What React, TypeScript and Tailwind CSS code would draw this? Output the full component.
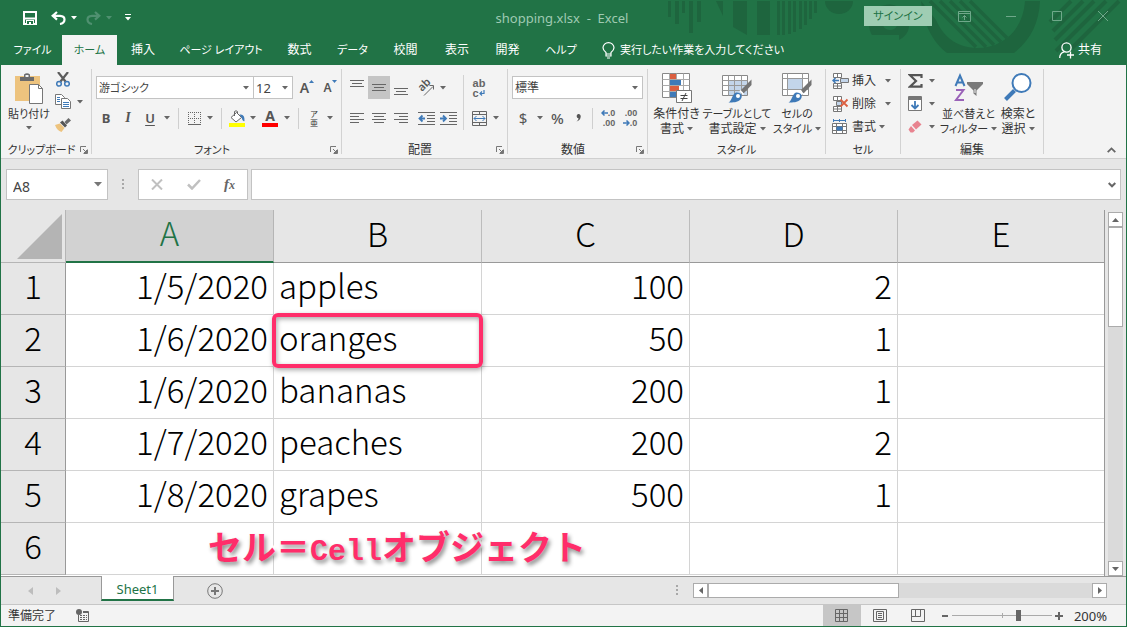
import React, { ReactNode, useState } from "react";

const DARK = "#666666";
const BLUE = "#3f7ab8";

function Caret({ className = "text-[#666]" }: { className?: string }) {
  return (
    <svg width="6" height="4" viewBox="0 0 6 4" className={"inline-block shrink-0 " + className} aria-hidden="true">
      <path d="M0 0H6L3 3.4Z" fill="currentColor" />
    </svg>
  );
}

// Labels made mostly of kana are set one size smaller than kanji labels.
function labelSize(text: string) {
  const kana = text.replace(/[^\u3041-\u30ff]/g, "").length;
  return kana * 2 > text.length ? "text-[11px]" : "text-[12px]";
}

function IconButton({ label, className = "w-[22px]", children }: { label: string; className?: string; children: ReactNode }) {
  return (
    <button type="button" aria-label={label} className={"flex h-full shrink-0 items-center justify-center " + className}>
      {children}
    </button>
  );
}

function CaretButton({ label }: { label: string }) {
  return (
    <IconButton label={label} className="w-3">
      <Caret />
    </IconButton>
  );
}

function RowDivider() {
  return <span className="mx-[5px] h-[21px] w-px shrink-0 bg-[#cfcfcf]" />;
}

function Group({ title, launcher, className, children }: { title: string; launcher?: boolean; className: string; children: ReactNode }) {
  return (
    <>
      <section aria-label={title} className={"flex shrink-0 flex-col " + className}>
        <div className="flex h-[72px]">{children}</div>
        <div className="flex h-[17px] items-center px-[3px]">
          <span className={"flex-1 whitespace-nowrap text-center leading-4 text-[#333] " + labelSize(title)}>{title}</span>
          {launcher && (
            <button type="button" aria-label={title + "の詳細"} className="flex w-[9px] justify-center">
              <svg width="8" height="8" viewBox="0 0 8 8" fill="none" stroke="#777" aria-hidden="true">
                <path d="M.5 6V.5H6M3 3L6.5 6.5M7.5 3.5V7.5H3.5" />
                <path d="M7 4V7H4Z" fill="#777" />
              </svg>
            </button>
          )}
        </div>
      </section>
      <span className="h-[85px] w-px shrink-0 bg-[#d2d2d2]" />
    </>
  );
}

function BigButton({ icon, lines, className }: { icon: ReactNode; lines: [string, string]; className: string }) {
  return (
    <button type="button" className={"flex shrink-0 flex-col items-center pt-1 leading-[15px] text-[#333] " + className}>
      <span className="flex h-[33px] items-start justify-center">{icon}</span>
      <span className={"whitespace-nowrap leading-[15px] " + labelSize(lines[0])}>{lines[0]}</span>
      <span className={"flex items-center gap-[3px] whitespace-nowrap leading-[15px] " + labelSize(lines[1])}>
        {lines[1]}
        <Caret />
      </span>
    </button>
  );
}

function HLines({ rows }: { rows: [number, number, number][] }) {
  return (
    <svg width="15" height="15" viewBox="0 0 15 15" stroke={DARK} aria-hidden="true">
      {rows.map(([y, a, b]) => (
        <path key={y} d={`M${a} ${y}.5H${b}`} />
      ))}
    </svg>
  );
}

function SelectBox({ label, options, className }: { label: string; options: string[]; className: string }) {
  return (
    <div className={"relative h-[23px] shrink-0 " + className}>
      <select
        aria-label={label}
        className="block h-full w-full appearance-none border border-[#c3c3c3] bg-white pl-[2px] leading-5 text-[#444] outline-none"
      >
        {options.map((o) => (
          <option key={o}>{o}</option>
        ))}
      </select>
      <span className="pointer-events-none absolute inset-y-0 right-[5px] flex items-center">
        <Caret />
      </span>
    </div>
  );
}

function TitlePattern() {
  return (
    <svg className="pointer-events-none absolute right-0 top-0" width="460" height="54" viewBox="667 0 460 54" fill="#1e653e" aria-hidden="true">
      <path d="M668 1h3v16h-3zM675 1h4v23h-4zM682 1h3v12h-3zM689 1h4v32h-4zM697 1h4v21h-4zM716 1h7v15zM733 1h14v34l-14-8zM757 1h13v34h-13z" />
      <path d="M777 1h3v34h-3zM782 1h3v34h-3zM788 1h3v33h-3zM793 1h3v31h-3zM799 1h3v28h-3zM804 1h3v24h-3zM809 1h3v18h-3zM814 1h3v12h-3z" />
      <path d="M825 1h28a14 13 0 0 1-28 0z" />
      <path fillRule="evenodd" d="M872 35A20 20 0 1 1 908 31A20 20 0 0 1 899 40V35ZM890 14A8 8 0 1 0 890.1 14Z" />
      <path d="M921 1C924 27 934 43 947 53H1014C1030 40 1039 24 1040 1H1025C1023 30 1003 48 977 48C955 48 942 34 936 20Z" />
      <g stroke="#1e653e" strokeWidth="3.5">
        <path d="M930 1L976 47M940 1L986 47M950 1L994 45M960 1L1001 42M970 1L1007 38" />
      </g>
      <g stroke="#1e653e" strokeWidth="4">
        <path d="M1071 1L1050 22M1083 1L1053 31M1094 1L1055 40M1106 1L1056 51M1119 1L1072 48" />
      </g>
    </svg>
  );
}

function TitleBar() {
  return (
    <header className="relative flex h-[35px] items-center bg-[#217346] text-white">
      <TitlePattern />
      <div className="flex h-full w-[260px] shrink-0 items-center pl-[23px]">
        <button type="button" aria-label="上書き保存" className="mr-[14px]">
          <svg width="14" height="14" viewBox="0 0 14 14" fill="none" stroke="white" strokeWidth="2" aria-hidden="true">
            <path d="M1 1H13V13H1Z" />
            <path d="M2 7.500H12" strokeWidth="2" />
            <path d="M3 9H11V13H3Z" fill="white" stroke="none" />
            <path d="M4 10H10V13H4Z" fill="#217346" stroke="none" />
            <path d="M6 11H8V13H6Z" fill="white" stroke="none" />
          </svg>
        </button>
        <button type="button" aria-label="元に戻す" className="flex items-center gap-[5px]">
          <svg width="15" height="14" viewBox="0 0 15 14" fill="none" stroke="white" strokeWidth="2.200" aria-hidden="true">
            <path d="M6 1L1.700 4.800L6 8.600M2 4.800H9C15 5 15 12 9 13" />
          </svg>
          <Caret className="text-white" />
        </button>
        <button type="button" aria-label="やり直し" className="ml-[9px] flex items-center gap-[5px]">
          <svg width="15" height="14" viewBox="0 0 15 14" fill="none" stroke="#4f9070" strokeWidth="2.200" aria-hidden="true">
            <path d="M9 1L13.300 4.800L9 8.600M13 4.800H6C0 5 0 12 6 13" />
          </svg>
          <Caret className="text-[#4f9070]" />
        </button>
        <button type="button" aria-label="クイック アクセスのカスタマイズ" className="ml-[13px]">
          <svg width="6" height="7" viewBox="0 0 6 7" fill="white" aria-hidden="true">
            <path d="M0 0h6v1h-6zM0 3h6l-3 3.400z" />
          </svg>
        </button>
      </div>
      <h1 className="flex-1 whitespace-pre text-center text-[13px] font-normal leading-5 text-[#9fcab2]">shopping.xlsx  -  Excel</h1>
      <div className="relative flex h-full w-[263px] shrink-0 items-start">
        <button type="button" className="mt-[6px] h-5 w-[68px] bg-[#9fcdb3] text-[11px] leading-5 text-[#217346]">
          サインイン
        </button>
        <button type="button" aria-label="リボンの表示オプション" className="mt-[11px] ml-[26px]">
          <svg width="13" height="11" viewBox="0 0 13 11" fill="none" stroke="#6fa88a" aria-hidden="true">
            <path d="M.5 .5H12.500V10.500H.5ZM.5 2.500H12.500M6.500 9V4.500M4.500 6.500L6.500 4.500L8.500 6.500" />
          </svg>
        </button>
        <button type="button" aria-label="最小化" className="mt-[11px] ml-[35px]">
          <svg width="10" height="10" viewBox="0 0 10 10" stroke="#6fa88a" aria-hidden="true">
            <path d="M0 5.500H10" />
          </svg>
        </button>
        <button type="button" aria-label="最大化" className="mt-[11px] ml-[36px]">
          <svg width="10" height="10" viewBox="0 0 10 10" fill="none" stroke="#6fa88a" aria-hidden="true">
            <path d="M.5 .5H9.500V9.500H.5Z" />
          </svg>
        </button>
        <button type="button" aria-label="閉じる" className="mt-[11px] ml-[36px]">
          <svg width="10" height="10" viewBox="0 0 10 10" stroke="#6fa88a" aria-hidden="true">
            <path d="M0 0L10 10M10 0L0 10" />
          </svg>
        </button>
      </div>
    </header>
  );
}

const TABS: [string, string][] = [
  ["ファイル", "w-[59px]"],
  ["ホーム", "w-[55px]"],
  ["挿入", "w-[52px]"],
  ["ページ レイアウト", "w-[104px]"],
  ["数式", "w-[53px]"],
  ["データ", "w-[53px]"],
  ["校閲", "w-[53px]"],
  ["表示", "w-[50px]"],
  ["開発", "w-[51px]"],
  ["ヘルプ", "w-[56px]"],
];

function TabStrip() {
  return (
    <nav className="flex h-[30px] items-stretch bg-[#217346] pl-[3px] text-[12px] leading-5 text-white">
      {TABS.map(([name, width]) => (
        <button
          key={name}
          type="button"
          className={"relative shrink-0 whitespace-nowrap " + labelSize(name) + " " + width + (name === "ホーム" ? " bg-[#f3f3f3] text-[#217346]" : "")}
        >
          {name}
        </button>
      ))}
      <button type="button" className="relative ml-[13px] flex items-center gap-[5px] whitespace-nowrap text-[11px]">
        <svg width="13" height="17" viewBox="0 0 13 17" fill="none" stroke="white" strokeWidth="1.2" aria-hidden="true">
          <path d="M4 12V10.5C2 9 1 7.500 1 5.800A5.500 5.200 0 0 1 12 5.800C12 7.500 11 9 9 10.500V12ZM4 12V14H9V12M5 16H8" />
        </svg>
        実行したい作業を入力してください
      </button>
      <button type="button" className="relative ml-auto mr-[25px] flex items-center gap-1">
        <svg width="15" height="17" viewBox="0 0 15 17" fill="none" stroke="white" strokeWidth="1.3" aria-hidden="true">
          <circle cx="7.500" cy="5.500" r="4.600" />
          <path d="M.7 16C.7 12.500 2.500 10.700 5 9.800M11.500 9.500V16.500M8 13H15" />
        </svg>
        共有
      </button>
    </nav>
  );
}

function PasteIcon() {
  return (
    <svg width="29" height="31" viewBox="0 0 29 31" aria-hidden="true">
      <path d="M0 3H25V28H0Z" fill="#edc37e" />
      <path d="M5 8V4H9V1.500Q12 -1 15 1.500V4H19V8Z" fill="#6b6b6b" />
      <path d="M10.500 2H13.500V4H10.500Z" fill="#f3f3f3" />
      <path d="M14.500 11.500H23.500L27.500 15.500V30.500H14.500Z" fill="white" stroke="#777" />
      <path d="M23.500 11.500V15.500H27.500" fill="none" stroke="#777" />
    </svg>
  );
}

function ClipboardGroup() {
  return (
    <Group title="クリップボード" launcher className="w-[90px]">
      <button type="button" className="ml-[3px] flex w-[50px] shrink-0 flex-col items-center pt-1 text-[11px] leading-4 text-[#333]">
        <PasteIcon />
        <span className="mt-[2px] whitespace-nowrap">貼り付け</span>
        <Caret className="mt-1 text-[#666]" />
      </button>
      <div className="flex flex-col">
        <div className="flex h-[21px]">
          <IconButton label="切り取り" className="w-[18px]">
            <svg width="14" height="15" viewBox="0 0 14 15" fill="none" aria-hidden="true">
              <path d="M2 0L9.500 9.500M12 0L4.500 9.500" stroke="#5c5c5c" strokeWidth="2.200" />
              <circle cx="3" cy="11.800" r="2.300" stroke={BLUE} strokeWidth="1.500" />
              <circle cx="11" cy="11.800" r="2.300" stroke={BLUE} strokeWidth="1.500" />
            </svg>
          </IconButton>
        </div>
        <div className="flex h-[23px]">
          <IconButton label="コピー" className="w-[18px]">
            <svg width="16" height="15" viewBox="0 0 16 15" fill="white" stroke="#777" aria-hidden="true">
              <path d="M.5 .5H6.500L9.500 3.500V10.500H.5Z" />
              <path d="M2 3.500H5M2 5.500H5M2 7.500H5" stroke={BLUE} />
              <path d="M6.500 4.500H12.500L15.500 7.500V14.500H6.500Z" />
              <path d="M8 8.500H14M8 10.500H14M8 12.500H14" stroke={BLUE} />
            </svg>
          </IconButton>
          <IconButton label="コピーのオプション" className="w-[16px]">
            <Caret />
          </IconButton>
        </div>
        <div className="flex h-[23px]">
          <IconButton label="書式のコピー" className="w-[18px]">
            <svg width="16" height="14" viewBox="0 0 16 14" aria-hidden="true">
              <path d="M0 7L5 5.500L9.500 10L6.500 14Q2 12.500 0 7Z" fill="#edc37e" />
              <path d="M5 4.500L7.500 2.500L12 7.500L10 9.500Z" fill="#555" />
              <path d="M9.500 4L13.500 0L16 2.500L11.500 6.500Z" fill="#6b6b6b" />
            </svg>
          </IconButton>
        </div>
      </div>
    </Group>
  );
}

function FontGroup() {
  return (
    <Group title="フォント" launcher className="w-[249px]">
      <div className="flex flex-col gap-2 pt-[7px]">
        <div className="flex h-[23px] pl-1">
          <SelectBox label="フォント" options={["游ゴシック"]} className="w-[158px] text-[11px]" />
          <SelectBox label="フォント サイズ" options={["12"]} className="-ml-px w-10 text-[13px]" />
          <IconButton label="フォント サイズの拡大" className="ml-[2px] w-6">
            <span className="text-[14px] font-semibold leading-5 text-[#555]">A</span>
            <svg width="5" height="3" viewBox="0 0 5 3" className="mb-3" aria-hidden="true">
              <path d="M0 3L2.500 0L5 3Z" fill={BLUE} />
            </svg>
          </IconButton>
          <IconButton label="フォント サイズの縮小" className="w-[22px]">
            <span className="text-[12px] font-semibold leading-5 text-[#555]">A</span>
            <svg width="5" height="3" viewBox="0 0 5 3" className="mb-3" aria-hidden="true">
              <path d="M0 0L2.500 3L5 0Z" fill={BLUE} />
            </svg>
          </IconButton>
        </div>
        <div className="flex h-[22px] items-center pl-[3px] text-[#555]">
          <IconButton label="太字">
            <span className="text-[13px] font-bold leading-5">B</span>
          </IconButton>
          <IconButton label="斜体">
            <span className="font-['Liberation_Serif',serif] text-[14px] font-bold italic leading-5">I</span>
          </IconButton>
          <IconButton label="下線">
            <span className="text-[13px] font-semibold leading-5 underline underline-offset-2">U</span>
          </IconButton>
          <CaretButton label="下線の種類" />
          <RowDivider />
          <IconButton label="罫線" className="w-5">
            <svg width="13" height="13" viewBox="0 0 13 13" stroke={DARK} strokeDasharray="1 1" fill="none" aria-hidden="true">
              <path d="M0 .5H13M0 6.500H13M.5 0V12M6.500 0V12M12.500 0V12" />
              <path d="M0 12.500H13" strokeDasharray="none" />
            </svg>
          </IconButton>
          <CaretButton label="罫線の種類" />
          <RowDivider />
          <IconButton label="塗りつぶしの色" className="w-5">
            <svg width="17" height="17" viewBox="0 0 17 17" aria-hidden="true">
              <path d="M7.500 2.500L12.500 7.500L7 12L2 7.500Z" fill="white" stroke="#666" />
              <path d="M5.500 6V1.500Q7 0 8.500 1.500V4" fill="none" stroke="#666" />
              <path d="M10.500 4.500Q16 3.500 15.500 11Q13.500 12 12.800 8Z" fill={BLUE} />
              <path d="M0 13H16V17H0Z" fill="#ffff00" />
            </svg>
          </IconButton>
          <CaretButton label="塗りつぶしの色の選択" />
          <IconButton label="フォントの色">
            <span className="flex w-4 flex-col items-center border-b-4 border-[#f00] text-[14px] font-bold leading-[14px]">A</span>
          </IconButton>
          <CaretButton label="フォントの色の選択" />
          <RowDivider />
          <IconButton label="ふりがなの表示" className="w-5">
            <span className="flex flex-col items-center text-[8px] leading-[9px] text-[#333]">
              <span>ア</span>
              <span>亜</span>
            </span>
          </IconButton>
          <CaretButton label="ふりがなの設定" />
        </div>
      </div>
    </Group>
  );
}

function Indent({ outdent }: { outdent?: boolean }) {
  return (
    <svg width="17" height="13" viewBox="0 0 17 13" fill="none" stroke={DARK} aria-hidden="true">
      <path d="M0 .5H17M9 3.500H17M9 6.500H17M9 9.500H17M0 12.500H17" />
      {outdent ? (
        <path d="M1 6.500H7M4.500 3.500L1.500 6.500L4.500 9.500" stroke={BLUE} strokeWidth="1.800" />
      ) : (
        <path d="M0 6.500H6M3 3.500L6 6.500L3 9.500" stroke={BLUE} strokeWidth="1.800" />
      )}
    </svg>
  );
}

function AlignmentGroup() {
  return (
    <Group title="配置" launcher className="w-[165px]">
      <div className="flex flex-col gap-2 pt-[7px] pl-1">
        <div className="flex h-[23px]">
          <IconButton label="上揃え">
            <HLines rows={[[0, 0, 14], [3, 2, 12], [6, 0, 14]]} />
          </IconButton>
          <IconButton label="上下中央揃え" className="w-[22px] bg-[#c5c5c5]">
            <HLines rows={[[4, 0, 14], [7, 2, 12], [10, 0, 14]]} />
          </IconButton>
          <IconButton label="下揃え">
            <HLines rows={[[8, 0, 14], [11, 2, 12], [14, 0, 14]]} />
          </IconButton>
          <IconButton label="方向" className="ml-[3px] w-[22px]">
            <svg width="18" height="18" viewBox="0 0 18 18" className="overflow-visible" aria-hidden="true">
              <text x="0" y="0" transform="translate(5 13) rotate(-45)" fontSize="11" fontWeight="600" fill="#555">
                ab
              </text>
              <path d="M7 16.500L16 7.500M12.500 6.500H16.500V10.500" fill="none" stroke="#666" />
            </svg>
          </IconButton>
          <CaretButton label="方向の選択" />
        </div>
        <div className="flex h-[22px]">
          <IconButton label="左揃え">
            <HLines rows={[[2, 0, 14], [5, 0, 9], [8, 0, 14], [11, 0, 9]]} />
          </IconButton>
          <IconButton label="中央揃え">
            <HLines rows={[[2, 0, 14], [5, 2, 12], [8, 0, 14], [11, 2, 12]]} />
          </IconButton>
          <IconButton label="右揃え">
            <HLines rows={[[2, 0, 14], [5, 5, 14], [8, 0, 14], [11, 5, 14]]} />
          </IconButton>
          <IconButton label="インデントを減らす" className="ml-[3px] w-[22px]">
            <Indent outdent />
          </IconButton>
          <IconButton label="インデントを増やす">
            <Indent />
          </IconButton>
        </div>
      </div>
      <span className="mx-1 mt-[6px] h-[55px] w-px shrink-0 bg-[#d2d2d2]" />
      <div className="flex flex-col gap-2 pt-[7px]">
        <div className="flex h-[23px]">
          <IconButton label="折り返して全体を表示する">
            <span className="flex flex-col items-start font-['Liberation_Sans',sans-serif] text-[11px] font-bold leading-[10px] text-[#666]">
              <span>ab</span>
              <span className="flex items-center">
                c
                <svg width="6" height="6" viewBox="0 0 6 6" fill="none" stroke={BLUE} strokeWidth="1.200" aria-hidden="true">
                  <path d="M5 0V3.500H1M3 1.500L1 3.500L3 5.500" />
                </svg>
              </span>
            </span>
          </IconButton>
        </div>
        <div className="flex h-[22px]">
          <IconButton label="セルを結合して中央揃え">
            <svg width="15" height="15" viewBox="0 0 15 15" fill="none" stroke={DARK} aria-hidden="true">
              <path d="M.5 .5H14.500V14.500H.5ZM.5 3.500H14.500M.5 11.500H14.500M7.500 .5V3.500M7.500 11.500V14.500" />
              <path d="M2 7.500H13M4.500 5L2 7.500L4.500 10M10.500 5L13 7.500L10.500 10" stroke={BLUE} />
            </svg>
          </IconButton>
          <CaretButton label="セルの結合の選択" />
        </div>
      </div>
    </Group>
  );
}

function DecimalIcon({ increase }: { increase?: boolean }) {
  return (
    <span className="flex flex-col items-end font-['Liberation_Sans',sans-serif] text-[9px] font-bold leading-[10px] text-[#666]">
      <span className="flex items-center">
        {increase && (
          <svg width="7" height="6" viewBox="0 0 7 6" fill="none" stroke={BLUE} strokeWidth="1.500" aria-hidden="true">
            <path d="M1 3H7M3.500 .5L1 3L3.500 5.500" />
          </svg>
        )}
        {increase ? ".0" : ".00"}
      </span>
      <span className="flex items-center">
        {!increase && (
          <svg width="7" height="6" viewBox="0 0 7 6" fill="none" stroke={BLUE} strokeWidth="1.500" aria-hidden="true">
            <path d="M0 3H6M3.500 .5L6 3L3.500 5.500" />
          </svg>
        )}
        {increase ? ".00" : ".0"}
      </span>
    </span>
  );
}

function NumberGroup() {
  return (
    <Group title="数値" launcher className="w-[139px]">
      <div className="flex flex-col gap-2 pt-[7px] pl-1">
        <SelectBox label="数値の書式" options={["標準"]} className="w-[131px] text-[12px]" />
        <div className="flex h-[22px] items-center text-[#555]">
          <IconButton label="通貨表示形式">
            <span className="text-[15px] leading-5">$</span>
          </IconButton>
          <CaretButton label="通貨の選択" />
          <IconButton label="パーセント スタイル" className="w-[23px]">
            <span className="text-[15px] font-medium leading-5">%</span>
          </IconButton>
          <IconButton label="桁区切りスタイル" className="w-[18px]">
            <svg width="5" height="8" viewBox="0 0 5 8" fill="#555" aria-hidden="true">
              <path d="M2.300 0A2.200 2.200 0 0 1 4.700 2.500C4.700 5 3 7 .5 7.500C1.800 6.500 2.500 5.500 2.500 4.300A2.200 2.200 0 0 1 2.300 0Z" />
            </svg>
          </IconButton>
          <RowDivider />
          <IconButton label="小数点以下の表示桁数を増やす" className="w-5">
            <DecimalIcon increase />
          </IconButton>
          <IconButton label="小数点以下の表示桁数を減らす" className="w-6">
            <DecimalIcon />
          </IconButton>
        </div>
      </div>
    </Group>
  );
}

function ConditionalIcon() {
  return (
    <svg width="30" height="30" viewBox="0 0 30 30" aria-hidden="true">
      <path d="M.5 .5H27.500V24.500H.5Z" fill="white" stroke="#888" />
      <path d="M.5 6.500H27.500M.5 12.500H27.500M.5 18.500H27.500M7.500 .5V24.500M14.500 .5V24.500M21.500 .5V24.500" stroke="#aaa" fill="none" />
      <path d="M8 1h6v5h-6zM8 13h9v5h-9z" fill="#dc5f40" />
      <path d="M8 7h11v5h-11zM8 19h6v5h-6z" fill={BLUE} />
      <path d="M14.500 17.500H29.500V29.500H14.500Z" fill="white" stroke="#777" />
      <path d="M18.500 22.500H25.500M18.500 25.500H25.500M24 20L20 28" stroke="#444" fill="none" />
    </svg>
  );
}

function Brush() {
  return (
    <>
      <path d="M29.500 6.500L19 17L21.500 20.500L29.500 12Z" fill="#747474" />
      <path d="M18 17.500L21.500 21.500" stroke="white" strokeWidth="1.500" />
      <path d="M6.500 29.500C10 28 10 21 14 19.500C19 19 21.500 23 18.500 26.500C15.500 29.500 11 29.500 6.500 29.500Z" fill={BLUE} />
      <circle cx="16" cy="23" r="2" fill="white" />
    </>
  );
}

function TableIcon() {
  return (
    <svg width="30" height="30" viewBox="0 0 30 30" aria-hidden="true">
      <path d="M.5 2.500H25.500V22.500H.5Z" fill="white" stroke="#888" />
      <path d="M7 8H25V22H7Z" fill="#c3d5ea" />
      <path d="M.5 7.500H25.500M.5 12.500H25.500M.5 17.500H25.500M6.500 2.500V22.500M12.500 2.500V22.500M19.500 2.500V22.500" stroke="#999" fill="none" />
      <Brush />
    </svg>
  );
}

function CellStyleIcon() {
  return (
    <svg width="30" height="30" viewBox="0 0 30 30" aria-hidden="true">
      <path d="M.5 .5H26.500V22.500H.5Z" fill="white" stroke="#888" />
      <path d="M6 6H21V16H6Z" fill="#c3d5ea" />
      <path d="M.5 5.500H26.500M.5 16.500H26.500M5.500 .5V22.500M20.500 .5V22.500" stroke="#999" fill="none" />
      <Brush />
    </svg>
  );
}

function StyleGroup() {
  return (
    <Group title="スタイル" className="w-[177px]">
      <BigButton icon={<ConditionalIcon />} lines={["条件付き", "書式"]} className="ml-[3px] w-[51px]" />
      <BigButton icon={<TableIcon />} lines={["テーブルとして", "書式設定"]} className="w-[70px]" />
      <BigButton icon={<CellStyleIcon />} lines={["セルの", "スタイル"]} className="w-[50px]" />
    </Group>
  );
}

function InsertCellIcon() {
  return (
    <svg width="17" height="16" viewBox="0 0 17 16" fill="white" stroke="#777" aria-hidden="true">
      <path d="M1.500 .5H9.500V4.500H1.500ZM5.500 .5V4.500M1.500 10.500H9.500V15.500H1.500ZM5.500 10.500V15.500M1.500 13H9.500" />
      <path d="M8.500 5.500H16.500V9.500H8.500Z" fill="#c3d5ea" />
      <path d="M1 7.500H7M3.500 5L1 7.500L3.500 10" fill="none" stroke={BLUE} strokeWidth="1.500" />
    </svg>
  );
}

function DeleteCellIcon() {
  return (
    <svg width="17" height="16" viewBox="0 0 17 16" fill="white" stroke="#777" aria-hidden="true">
      <path d="M1.500 .5H9.500V4.500H1.500ZM5.500 .5V4.500M1.500 10.500H9.500V15.500H1.500ZM5.500 10.500V15.500M1.500 13H9.500" />
      <path d="M4.500 5.500H9.500V9.500H4.500Z" fill="#c3d5ea" />
      <path d="M8.500 3.500L15.500 10.500M15.500 3.500L8.500 10.500" stroke="#dc5f40" strokeWidth="1.800" />
    </svg>
  );
}

function FormatCellIcon() {
  return (
    <svg width="16" height="16" viewBox="0 0 16 16" fill="white" stroke="#777" aria-hidden="true">
      <path d="M.5 4.500H14.500V14.500H.5ZM.5 7.500H14.500M.5 11.500H14.500M4.500 4.500V14.500M10.500 4.500V14.500" />
      <path d="M5 8h5v3h-5z" fill={BLUE} stroke={BLUE} />
      <path d="M1.500 1.500H13.500M1.500 0V3M13.500 0V3M7.500 0V3" stroke={BLUE} fill="none" />
    </svg>
  );
}

function CellGroup() {
  const rows: [string, ReactNode][] = [
    ["挿入", <InsertCellIcon />],
    ["削除", <DeleteCellIcon />],
    ["書式", <FormatCellIcon />],
  ];
  return (
    <Group title="セル" className="w-[74px]">
      <div className="flex flex-col pl-[6px]">
        {rows.map(([name, icon]) => (
          <button key={name} type="button" className="flex h-[23px] items-center text-[12px] leading-5 text-[#333]">
            <span className="flex w-5 items-center">{icon}</span>
            {name}
            <Caret className={name === "書式" ? "ml-[3px] text-[#666]" : "ml-[9px] text-[#666]"} />
          </button>
        ))}
      </div>
    </Group>
  );
}

function EditGroup() {
  const rows: [string, ReactNode][] = [
    [
      "オート SUM",
      <svg width="15" height="14" viewBox="0 0 15 14" fill="none" stroke="#555" strokeWidth="2.200" aria-hidden="true">
        <path d="M13.500 4V1.200H2L8 7L2 12.700H13.500V10" />
      </svg>,
    ],
    [
      "フィル",
      <svg width="15" height="15" viewBox="0 0 15 15" fill="white" stroke="#777" aria-hidden="true">
        <path d="M.5 .5H13.500V14.500H.5Z" />
        <path d="M1 1H13V3.500H1Z" fill="#777" />
        <path d="M7 5V12.500M3.500 9L7 12.500L10.500 9" fill="none" stroke={BLUE} strokeWidth="1.800" />
      </svg>,
    ],
    [
      "クリア",
      <svg width="14" height="13" viewBox="0 0 14 13" aria-hidden="true">
        <path d="M4 5L9.500 0.500L13.500 4.500L8 9.500Z" fill="#e8838f" />
        <path d="M3 6L7 10.500L5 12.500H2.500L.5 9.500Z" fill="#e8838f" />
      </svg>,
    ],
  ];
  return (
    <Group title="編集" className="w-[142px]">
      <div className="flex w-[39px] flex-col pl-[7px]">
        {rows.map(([name, icon]) => (
          <button key={name} type="button" aria-label={name} className="flex h-[23px] items-center">
            <span className="flex w-[21px] items-center">{icon}</span>
            <Caret />
          </button>
        ))}
      </div>
      <BigButton
        icon={
          <svg width="30" height="30" viewBox="0 0 30 30" aria-hidden="true">
            <path d="M1.500 13L6 2.500L10.500 13M3.200 9.500H8.800" fill="none" stroke={BLUE} strokeWidth="2" />
            <path d="M2 17H9.500L2 27H10" fill="none" stroke="#9a62b8" strokeWidth="2" />
            <path d="M13 9H29V11L22.500 17.500V23L19.500 20.500V17.500L13 11Z" fill="#7a7a7a" />
            <path d="M21 16V20" stroke="#f3f3f3" />
          </svg>
        }
        lines={["並べ替えと", "フィルター"]}
        className="w-[57px]"
      />
      <BigButton
        icon={
          <svg width="28" height="30" viewBox="0 0 28 30" fill="none" stroke={BLUE} aria-hidden="true">
            <path d="M10.500 17.500L1.500 26.500" strokeWidth="4" />
            <circle cx="17.500" cy="10" r="9" fill="white" strokeWidth="2" />
          </svg>
        }
        lines={["検索と", "選択"]}
        className="w-[42px]"
      />
    </Group>
  );
}

function Ribbon() {
  return (
    <div className="flex h-[94px] border-b border-[#cfcfcf] bg-[#f3f3f3] pt-1">
      <ClipboardGroup />
      <FontGroup />
      <AlignmentGroup />
      <NumberGroup />
      <StyleGroup />
      <CellGroup />
      <EditGroup />
      <button type="button" aria-label="リボンを折りたたむ" className="mb-[5px] ml-auto mr-[10px] self-end">
        <svg width="9" height="6" viewBox="0 0 9 6" fill="none" stroke="#666" strokeWidth="1.800" aria-hidden="true">
          <path d="M.7 5.200L4.500 1.400L8.300 5.200" />
        </svg>
      </button>
    </div>
  );
}

function Dots() {
  return (
    <svg width="2" height="11" viewBox="0 0 2 11" fill="#a8a8a8" aria-hidden="true">
      <path d="M0 0h2v2h-2zM0 4h2v2h-2zM0 8h2v2h-2z" />
    </svg>
  );
}

function FormulaBar() {
  return (
    <div className="flex h-[51px] items-start bg-[#e6e6e6] pt-[10px] pl-[5px] pr-[5px]">
      <div className="flex h-[31px] w-[102px] shrink-0 items-center border border-[#c3c3c3] bg-white pr-[5px]">
        <input aria-label="名前ボックス" defaultValue="A8" className="min-w-0 flex-1 bg-transparent pl-[6px] pt-1 text-[14px] leading-5 text-[#444] outline-none" />
        <button type="button" aria-label="名前の一覧" className="flex h-full items-center">
          <svg width="8" height="5" viewBox="0 0 8 5" fill="#777" aria-hidden="true">
            <path d="M0 0H8L4 4.500Z" />
          </svg>
        </button>
      </div>
      <span className="flex h-[31px] w-[30px] shrink-0 items-center justify-center">
        <Dots />
      </span>
      <div className="flex h-[31px] w-[110px] shrink-0 items-center justify-between border border-[#c3c3c3] bg-white px-3">
        <button type="button" aria-label="キャンセル">
          <svg width="12" height="11" viewBox="0 0 12 11" stroke="#c0c0c0" strokeWidth="2" aria-hidden="true">
            <path d="M1 .5L11 10.500M11 .5L1 10.500" />
          </svg>
        </button>
        <button type="button" aria-label="入力">
          <svg width="14" height="11" viewBox="0 0 14 11" fill="none" stroke="#c0c0c0" strokeWidth="2.500" aria-hidden="true">
            <path d="M1 5.500L5 9.500L13 1" />
          </svg>
        </button>
        <button type="button" aria-label="関数の挿入" className="font-['Liberation_Serif',serif] text-[15px] font-bold italic leading-5 text-[#666]">
          f<span className="text-[12px]">x</span>
        </button>
      </div>
      <div className="ml-[3px] flex h-[31px] flex-1 items-center border border-[#c3c3c3] bg-white pr-1">
        <input aria-label="数式バー" className="min-w-0 flex-1 bg-transparent px-2 text-[14px] outline-none" />
        <button type="button" aria-label="数式バーの展開">
          <svg width="8" height="6" viewBox="0 0 8 6" fill="none" stroke="#666" strokeWidth="2" aria-hidden="true">
            <path d="M.7 1L4 4.300L7.300 1" />
          </svg>
        </button>
      </div>
    </div>
  );
}

const ROWS: string[][] = [
  ["1/5/2020", "apples", "100", "2", ""],
  ["1/6/2020", "oranges", "50", "1", ""],
  ["1/6/2020", "bananas", "200", "1", ""],
  ["1/7/2020", "peaches", "200", "2", ""],
  ["1/8/2020", "grapes", "500", "1", ""],
  ["", "", "", "", ""],
];

function Sheet() {
  return (
    <div className="relative flex-1 border-r border-[#999] bg-white">
      <table className="w-full table-fixed border-separate border-spacing-0 font-['Noto_Sans_CJK_JP',sans-serif] text-[33px] font-light leading-[43px] text-black [font-feature-settings:normal]">
        <colgroup>
          <col className="w-[65px]" />
          <col className="w-[208px]" />
          <col className="w-[208px]" />
          <col className="w-[208px]" />
          <col className="w-[208px]" />
          <col />
        </colgroup>
        <thead>
          <tr>
            <th className="h-[53px] border-b border-r border-[#b5b5b5] bg-[#e6e6e6] p-0">
              <button type="button" aria-label="すべて選択" className="flex h-[52px] w-full items-end justify-end pb-[3px] pr-[3px]">
                <svg width="45" height="45" viewBox="0 0 45 45" aria-hidden="true">
                  <path d="M45 0V45H0Z" fill="#b4b4b4" />
                </svg>
              </button>
            </th>
            {["A", "B", "C", "D", "E"].map((c) => (
              <th
                key={c}
                scope="col"
                className={
                  "h-[53px] px-0 pt-0 pb-[6px] text-center font-light " +
                  (c === "A"
                    ? "border-b-2 border-r border-b-[#217346] border-r-[#b5b5b5] bg-[#d2d2d2] text-[#217346]"
                    : c === "E"
                      ? "border-b border-[#999] bg-[#e6e6e6]"
                      : "border-b border-r border-b-[#999] border-r-[#bcbcbc] bg-[#e6e6e6]")
                }
              >
                {c}
              </th>
            ))}
          </tr>
        </thead>
        <tbody>
          {ROWS.map((row, r) => (
            <tr key={r}>
              <th scope="row" className="h-[52px] border-b border-r border-b-[#b5b5b5] border-r-[#999] bg-[#e6e6e6] px-0 pt-0 pb-[6px] text-center font-light">
                {r + 1}
              </th>
              {row.map((value, c) => (
                <td
                  key={c}
                  className={
                    "relative h-[52px] whitespace-nowrap border-b border-[#d4d4d4] pt-0 pb-[6px] " +
                    (c === 1 ? "pl-[5px] text-left " : "pr-[5px] text-right ") +
                    (c === 4 ? "" : "border-r")
                  }
                >
                  {value}
                  {r === 1 && c === 1 && (
                    <span className="pointer-events-none absolute -bottom-[2px] -left-[2px] -right-[2px] -top-[2px] z-10 rounded-[6px] border-4 border-[#ff2d6a] shadow-[1px_2px_5px_rgba(0,0,0,0.35),inset_1px_2px_5px_rgba(0,0,0,0.35)]" />
                  )}
                </td>
              ))}
            </tr>
          ))}
        </tbody>
      </table>
      <p className="pointer-events-none absolute bottom-px left-[207px] flex items-baseline whitespace-nowrap font-['Noto_Sans_CJK_JP',sans-serif] text-[34px] font-bold leading-[46px] text-[#ff2d6a] [-webkit-text-stroke:4px_white] [font-feature-settings:normal] [paint-order:stroke_fill] [text-shadow:2px_3px_4px_rgba(0,0,0,0.45)]">
        <span>セル＝</span>
        <span className="font-['Liberation_Mono',monospace] text-[30px]">Cell</span>
        <span>オブジェクト</span>
      </p>
    </div>
  );
}

function VerticalScroll() {
  return (
    <div className="flex w-[21px] shrink-0 flex-col items-center bg-[#e6e6e6] pt-[2px]">
      <div className="flex w-[15px] flex-1 flex-col bg-[#dadada]">
        <button type="button" aria-label="上へスクロール" className="flex h-[15px] items-center justify-center border border-[#ababab] bg-white">
          <svg width="7" height="4" viewBox="0 0 7 4" fill="#666" aria-hidden="true">
            <path d="M0 4H7L3.500 0Z" />
          </svg>
        </button>
        <div className="h-[100px] border border-[#ababab] bg-white" />
        <button type="button" aria-label="下へスクロール" className="mt-auto flex h-[15px] items-center justify-center border border-[#ababab] bg-white">
          <svg width="7" height="4" viewBox="0 0 7 4" fill="#666" aria-hidden="true">
            <path d="M0 0H7L3.500 4Z" />
          </svg>
        </button>
      </div>
    </div>
  );
}

function SheetBar() {
  return (
    <div className="flex h-7 items-start bg-[#e6e6e6]">
      <div className="flex h-full w-[100px] shrink-0 items-center gap-[23px] border-t border-[#999] pl-[27px]">
        <button type="button" aria-label="前のシート">
          <svg width="5" height="8" viewBox="0 0 5 8" fill="#bdbdbd" aria-hidden="true">
            <path d="M5 0V8L0 4Z" />
          </svg>
        </button>
        <button type="button" aria-label="次のシート">
          <svg width="5" height="8" viewBox="0 0 5 8" fill="#bdbdbd" aria-hidden="true">
            <path d="M0 0V8L5 4Z" />
          </svg>
        </button>
      </div>
      <button type="button" className="h-[25px] w-[73px] shrink-0 border-x border-b-2 border-x-[#999] border-b-[#217346] bg-white pt-[3px] text-[13px] leading-5 text-[#217346]">
        Sheet1
      </button>
      <div className="flex h-full flex-1 items-center border-t border-[#999] pl-[33px]">
        <button type="button" aria-label="新しいシート">
          <svg width="16" height="16" viewBox="0 0 16 16" fill="none" stroke="#777" aria-hidden="true">
            <circle cx="8" cy="8" r="7.300" />
            <path d="M8 4V12M4 8H12" strokeWidth="2" />
          </svg>
        </button>
        <span className="ml-auto mr-[15px]">
          <Dots />
        </span>
        <div className="mr-[19px] flex h-[15px] w-[414px] bg-[#dadada]">
          <button type="button" aria-label="左へスクロール" className="flex w-[15px] items-center justify-center border border-[#ababab] bg-white">
            <svg width="4" height="7" viewBox="0 0 4 7" fill="#666" aria-hidden="true">
              <path d="M4 0V7L0 3.500Z" />
            </svg>
          </button>
          <div className="w-[191px] border border-[#ababab] bg-white" />
          <button type="button" aria-label="右へスクロール" className="ml-auto flex w-[15px] items-center justify-center border border-[#ababab] bg-white">
            <svg width="4" height="7" viewBox="0 0 4 7" fill="#666" aria-hidden="true">
              <path d="M0 0V7L4 3.500Z" />
            </svg>
          </button>
        </div>
      </div>
    </div>
  );
}

function StatusBar() {
  const [zoom, setZoom] = useState(67);
  return (
    <footer className="flex h-[22px] items-center border-t border-[#c6c6c6] bg-[#f3f3f3] pl-[7px] text-[12px] leading-5 text-[#333]">
      <span className="whitespace-nowrap">準備完了</span>
      <button type="button" aria-label="マクロの記録" className="ml-5">
        <svg width="14" height="13" viewBox="0 0 14 13" fill="none" stroke="#666" aria-hidden="true">
          <path d="M2.500 6V12.500H12.500V2.500H7" />
          <path d="M7 3H12" strokeWidth="2" />
          <path d="M4 6.500H11M4 8.500H11M4 10.500H11" strokeDasharray="2 1" />
          <circle cx="3" cy="3" r="3" fill="#666" stroke="none" />
        </svg>
      </button>
      <div className="ml-auto flex h-full items-center">
        <button type="button" aria-label="標準" className="flex h-full w-[38px] items-center justify-center bg-[#c6c6c6]">
          <svg width="13" height="13" viewBox="0 0 13 13" fill="none" stroke="#666" aria-hidden="true">
            <path d="M.5 .5H12.500V12.500H.5ZM.5 4.500H12.500M.5 8.500H12.500M4.500 .5V12.500M8.500 .5V12.500" />
          </svg>
        </button>
        <button type="button" aria-label="ページ レイアウト表示" className="flex h-full w-[38px] items-center justify-center">
          <svg width="14" height="13" viewBox="0 0 14 13" fill="none" stroke="#666" aria-hidden="true">
            <path d="M.5 .5H13.500V12.500H.5ZM3.500 2.500H10.500V10.500H3.500ZM5 4.500H9M5 6.500H9M5 8.500H9" />
          </svg>
        </button>
        <button type="button" aria-label="改ページ プレビュー" className="flex h-full w-[38px] items-center justify-center">
          <svg width="14" height="13" viewBox="0 0 14 13" fill="none" stroke="#666" aria-hidden="true">
            <path d="M.5 .5H13.500V12.500H.5ZM.5 7.500H9.500V.5M4.500 .5V7.500" />
          </svg>
        </button>
        <button type="button" aria-label="縮小" className="ml-1">
          <svg width="8" height="8" viewBox="0 0 8 8" stroke="#666" strokeWidth="2" aria-hidden="true">
            <path d="M1 4H7" />
          </svg>
        </button>
        <div className="relative mx-[3px] flex h-full w-[100px] items-center">
          <span className="absolute left-[50px] top-2 h-[5px] w-px bg-[#aaa]" />
          <input
            type="range"
            aria-label="ズーム"
            min={0}
            max={100}
            value={zoom}
            onChange={(e) => setZoom(Number(e.target.value))}
            className="relative h-[11px] w-full appearance-none bg-transparent [&::-webkit-slider-runnable-track]:h-px [&::-webkit-slider-runnable-track]:bg-[#aaa] [&::-webkit-slider-thumb]:-mt-[5px] [&::-webkit-slider-thumb]:h-[11px] [&::-webkit-slider-thumb]:w-[5px] [&::-webkit-slider-thumb]:appearance-none [&::-webkit-slider-thumb]:bg-[#666]"
          />
        </div>
        <button type="button" aria-label="拡大">
          <svg width="8" height="8" viewBox="0 0 8 8" stroke="#666" strokeWidth="2" aria-hidden="true">
            <path d="M0 4H8M4 0V8" />
          </svg>
        </button>
        <button type="button" className="ml-[11px] mr-[19px] text-[13px]">
          200%
        </button>
      </div>
    </footer>
  );
}

export default function App() {
  return (
    <div className="flex min-h-screen flex-col bg-[#e6e6e6] font-['Noto_Sans','Noto_Sans_CJK_JP',sans-serif] [font-feature-settings:'palt']">
      <div className="shrink-0">
        <TitleBar />
        <TabStrip />
      </div>
      <main className="flex flex-1 flex-col border-x border-b border-[#217346]">
        <Ribbon />
        <FormulaBar />
        <div className="flex flex-1">
          <Sheet />
          <VerticalScroll />
        </div>
        <SheetBar />
        <StatusBar />
      </main>
    </div>
  );
}
